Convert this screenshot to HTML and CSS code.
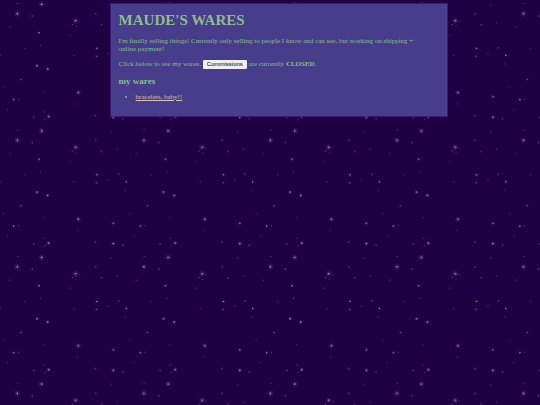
FILE: index.html
```html
<!DOCTYPE html>
<html lang="en">
<head>
  <meta charset="UTF-8">
  <meta name="viewport" content="width=device-width, initial-scale=1.0">
  <title>Maude's Wares</title>
  <link rel="stylesheet" href="styles.css">
</head>
<body>
  <!-- starry sky, one tile repeated -->
  <svg class="sky" aria-hidden="true">
    <defs>
      <pattern id="stars" width="380" height="380" patternUnits="userSpaceOnUse" patternTransform="scale(0.33305)">
        <g class="glow">
          <circle cx="125" cy="13" r="8"/>
          <circle cx="52" cy="41" r="8"/>
          <circle cx="227" cy="62" r="8"/>
          <circle cx="235" cy="278" r="7"/>
          <circle cx="111" cy="197" r="5"/>
          <circle cx="143" cy="207" r="5"/>
          <circle cx="146" cy="350" r="6"/>
          <circle cx="340" cy="351" r="6"/>
          <circle cx="340" cy="290" r="4"/>
        </g>
        <g class="bright">
          <rect x="123" y="11" width="4" height="4"/>
          <rect x="50" y="39" width="4" height="4"/>
          <rect x="225" y="60" width="4" height="4"/>
          <rect x="233" y="276" width="4" height="4"/>
          <rect x="144" y="348" width="4" height="4"/>
          <rect x="115" y="96" width="4" height="4"/>
          <rect x="289" y="143" width="4" height="4"/>
          <rect x="109" y="195" width="4" height="4"/>
          <rect x="141" y="205" width="4" height="4"/>
          <rect x="39" y="297" width="4" height="4"/>
          <rect x="338" y="289" width="4" height="3"/>
          <rect x="338" y="350" width="4" height="4"/>
          <rect x="377" y="164" width="3" height="4"/>
        </g>
        <g class="small">
          <rect x="95" y="46" width="3" height="4"/>
          <rect x="285" y="40" width="4" height="3"/>
          <rect x="303" y="73" width="4" height="3"/>
          <rect x="288" y="167" width="4" height="4"/>
          <rect x="354" y="142" width="4" height="3"/>
          <rect x="61" y="236" width="4" height="4"/>
          <rect x="99" y="351" width="4" height="3"/>
          <rect x="285" y="345" width="3" height="4"/>
          <rect x="367" y="355" width="4" height="3"/>
          <rect x="216" y="72" width="3" height="3"/>
        </g>
        <g class="faint">
          <rect x="51" y="9" width="4" height="3"/>
          <rect x="332" y="13" width="3" height="4"/>
          <rect x="237" y="63" width="3" height="3"/>
          <rect x="228" y="78" width="3" height="3"/>
          <rect x="28" y="80" width="4" height="3"/>
          <rect x="350" y="66" width="3" height="4"/>
          <rect x="209" y="104" width="3" height="3"/>
          <rect x="120" y="134" width="3" height="4"/>
          <rect x="72" y="144" width="3" height="3"/>
          <rect x="324" y="158" width="3" height="4"/>
          <rect x="220" y="165" width="4" height="3"/>
          <rect x="0" y="164" width="2" height="4"/>
          <rect x="374" y="190" width="4" height="3"/>
          <rect x="8" y="261" width="3" height="3"/>
          <rect x="129" y="273" width="3" height="3"/>
          <rect x="54" y="296" width="3" height="4"/>
          <rect x="231" y="310" width="3" height="3"/>
          <rect x="21" y="328" width="3" height="3"/>
          <rect x="130" y="334" width="4" height="3"/>
          <rect x="133" y="357" width="4" height="3"/>
        </g>
      </pattern>
    </defs>
    <rect width="100%" height="100%" fill="url(#stars)"/>
  </svg>

  <main class="container">
    <h1>MAUDE'S WARES</h1>
    <p>I'm finally selling things! Currently only selling to people I know and can see, but working on shipping + online payment!</p>
    <p>Click below to see my wares. <button class="commissions" type="button">Commissions</button> are currently <b>CLOSED</b>.</p>
    <h3>my wares</h3>
    <ul>
      <li><a href="bracelets.html">bracelets, baby!!</a></li>
    </ul>
  </main>
</body>
</html>
```
FILE: styles.css
```css
body {
  margin: 0;
  padding-top: 3px;
  background-color: #1e0043;
  color: darkseagreen;
  font-family: Georgia, "Liberation Serif", serif;
  font-size: 7px;
  line-height: 8px;
}

.sky {
  position: fixed;
  top: 0;
  left: 0;
  width: 100%;
  height: 100%;
  z-index: -1;
}

.glow {
  fill: #c8a0e8;
  opacity: 0.12;
}

.bright {
  fill: #e6d2f5;
  opacity: 0.8;
}

.small {
  fill: #c8aae0;
  opacity: 0.6;
}

.faint {
  fill: #b496d2;
  opacity: 0.4;
}

.container {
  box-sizing: border-box;
  width: 62.6%;
  margin-left: 20.3%;
  padding: 8px 16px 15px 8px;
  background-color: darkslateblue;
  border: 1px solid #3c1a78;
}

h1 {
  margin: 0 0 9px;
  font-size: 15px;
  line-height: 16px;
}

p {
  margin: 0 0 7px;
}

h3 {
  margin: 8px 0;
  font-size: 9px;
  line-height: 8px;
}

ul {
  margin: 0;
  padding-left: 17px;
}

a {
  color: #d8bfb8;
}

.commissions {
  padding: 0 3px;
  border: 1px solid #efefef;
  border-radius: 1px;
  background-color: #efefef;
  color: #000000;
  font-family: "Liberation Sans", sans-serif;
  font-size: 6px;
  line-height: 7px;
}
```
